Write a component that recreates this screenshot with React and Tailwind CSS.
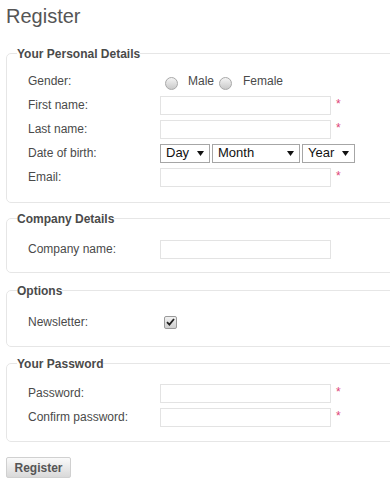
import { useState } from 'react'

const font = { fontFamily: '"Liberation Sans", Arial, sans-serif' }

function Radio({ checked, onClick }) {
    return (
        <span
            onClick={onClick}
            className="ml-[5px] mt-[5px] w-[13px] h-[13px] rounded-full border border-[#a8a8a8] bg-gradient-to-b from-[#f4f4f4] to-[#c9c9c9] flex items-center justify-center shrink-0"
        >
            {checked && <span className="w-[5px] h-[5px] rounded-full bg-[#333]" />}
        </span>
    )
}

function TextInput({ required, type = 'text' }) {
    return (
        <div className="flex items-start">
            <input
                type={type}
                className="w-[171px] h-[19px] border border-[#e3e3e3] bg-white outline-none px-1 text-[12px]"
            />
            {required && <span className="ml-[5px] mt-[1px] text-[12px] leading-[14px] text-[#dd4477]">*</span>}
        </div>
    )
}

function FakeSelect({ label, width }) {
    return (
        <div className={`${width} h-[19px] border border-[#a6a6a6] bg-white flex items-center justify-between pl-[5px] pr-[5px] text-[13px] text-[#111]`}>
            <span>{label}</span>
            <svg width="7" height="5" viewBox="0 0 7 5">
                <path d="M0 0 L7 0 L3.5 5 Z" fill="#111" />
            </svg>
        </div>
    )
}

function Row({ label, children }) {
    return (
        <div className="flex items-center h-[24px] pl-[11px]">
            <div className="w-[132px] text-[12px] text-[#4a4a4a]">{label}</div>
            {children}
        </div>
    )
}

function Section({ title, className, children }) {
    return (
        <fieldset className={`w-[420px] ml-[6px] border border-[#e6e6e6] rounded-[5px] pl-[10px] pr-0 ${className}`}>
            <legend className="px-0 pt-[2px] text-[12px] leading-[14px] font-bold text-[#4a4a4a]">{title}</legend>
            {children}
        </fieldset>
    )
}

export default function App() {
    const [gender, setGender] = useState(null)
    const [newsletter, setNewsletter] = useState(true)

    return (
        <div className="w-[390px] h-[493px] overflow-hidden bg-white" style={font}>
            <h1 className="pt-[4px] pl-[6px] text-[20px] leading-[24px] text-[#555]">Register</h1>

            <Section title="Your Personal Details" className="mt-[17px] pt-[8px] pb-[13px]">
                <Row label="Gender:">
                    <div className="flex items-center text-[12px] text-[#4a4a4a]">
                        <Radio checked={gender === 'm'} onClick={() => setGender('m')} />
                        <span className="ml-[10px]">Male</span>
                        <Radio checked={gender === 'f'} onClick={() => setGender('f')} />
                        <span className="ml-[11px]">Female</span>
                    </div>
                </Row>
                <Row label="First name:"><TextInput required /></Row>
                <Row label="Last name:"><TextInput required /></Row>
                <Row label="Date of birth:">
                    <div className="flex gap-[2px]">
                        <FakeSelect label="Day" width="w-[50px]" />
                        <FakeSelect label="Month" width="w-[88px]" />
                        <FakeSelect label="Year" width="w-[53px]" />
                    </div>
                </Row>
                <Row label="Email:"><TextInput required /></Row>
            </Section>

            <Section title="Company Details" className="mt-[7px] pt-[11px] pb-[11px]">
                <Row label="Company name:"><TextInput /></Row>
            </Section>

            <Section title="Options" className="mt-[9px] pt-[12px] pb-[12px]">
                <Row label="Newsletter:">
                    <span
                        onClick={() => setNewsletter(!newsletter)}
                        className="ml-[4px] w-[13px] h-[13px] rounded-[2px] border border-[#9a9a9a] bg-gradient-to-b from-[#f2f2f2] to-[#cfcfcf] flex items-center justify-center"
                    >
                        {newsletter && (
                            <svg width="9" height="8" viewBox="0 0 9 8">
                                <path d="M1 4.2 L3.4 6.6 L8 1" stroke="#222" strokeWidth="1.8" fill="none" />
                            </svg>
                        )}
                    </span>
                </Row>
            </Section>

            <Section title="Your Password" className="mt-[8px] pt-[10px] pb-[12px]">
                <Row label="Password:"><TextInput type="password" required /></Row>
                <Row label="Confirm password:"><TextInput type="password" required /></Row>
            </Section>

            <button className="mt-[15px] ml-[6px] w-[65px] h-[21px] rounded-[2px] border border-[#d0d0d0] bg-gradient-to-b from-[#fafafa] to-[#d9d9d9] text-[12px] font-bold text-[#555]">
                Register
            </button>
        </div>
    )
}
